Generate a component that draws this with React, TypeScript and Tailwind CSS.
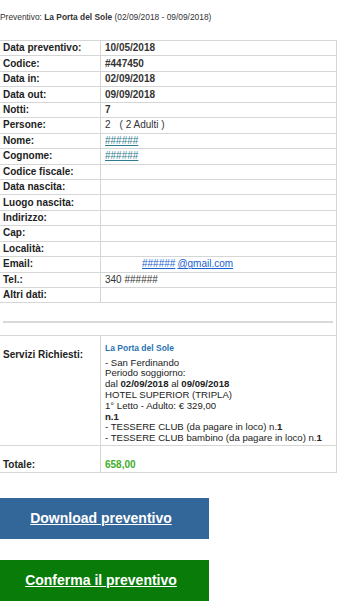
const rows: { label: string; value?: React.ReactNode }[] = [
  { label: 'Data preventivo:', value: <span className="font-bold">10/05/2018</span> },
  { label: 'Codice:', value: <span className="font-bold">#447450</span> },
  { label: 'Data in:', value: <span className="font-bold">02/09/2018</span> },
  { label: 'Data out:', value: <span className="font-bold">09/09/2018</span> },
  { label: 'Notti:', value: <span className="font-bold">7</span> },
  {
    label: 'Persone:',
    value: (
      <span>
        2<span className="ml-[9px]">( 2 Adulti )</span>
      </span>
    ),
  },
  { label: 'Nome:', value: <span className="text-[#2d7b8f] underline">######</span> },
  { label: 'Cognome:', value: <span className="text-[#2d7b8f] underline">######</span> },
  { label: 'Codice fiscale:' },
  { label: 'Data nascita:' },
  { label: 'Luogo nascita:' },
  { label: 'Indirizzo:' },
  { label: 'Cap:' },
  { label: 'Località:' },
  {
    label: 'Email:',
    value: (
      <span className="ml-[37px] text-[#1a5fd0] underline">
        ######<span className="ml-[2px]">@gmail.com</span>
      </span>
    ),
  },
  { label: 'Tel.:', value: <span>340 ######</span> },
  { label: 'Altri dati:' },
];

export default function App() {
  return (
    <div className="min-h-[616px] bg-white text-[#222] font-['Liberation_Sans',Arial,sans-serif]">
      <p className="pt-[12px] text-[8.4px] leading-[10px] text-[#333]">
        Preventivo: <span className="font-bold">La Porta del Sole</span> (02/09/2018 - 09/09/2018)
      </p>

      <div className="mt-[18px] w-[337px] border-r border-b border-[#d6d6d6] text-[10px] leading-[12px]">
        {rows.map((r) => (
          <div key={r.label} className="flex h-[15.45px] border-t border-[#d6d6d6]">
            <div className="flex w-[101px] items-center border-r border-[#d6d6d6] pl-[3px] font-bold">
              {r.label}
            </div>
            <div className="flex flex-1 items-center pl-[4px] text-[#333]">{r.value}</div>
          </div>
        ))}

        <div className="flex h-[32.3px] border-t border-[#d6d6d6] px-[3px] pt-[18px]">
          <div className="h-[2px] w-full bg-[#d9d9d9]" />
        </div>

        <div className="flex h-[110.7px] border-t border-[#d6d6d6]">
          <div className="w-[101px] border-r border-[#d6d6d6] pl-[3px] pt-[13px] font-bold">
            Servizi Richiesti:
          </div>
          <div className="flex-1 pl-[4px] pt-[7px] text-[9.6px] leading-[10.8px] text-[#222]">
            <div className="mb-[4px] text-[8.5px] font-bold text-[#2a74b5]">La Porta del Sole</div>
            <div>- San Ferdinando</div>
            <div>Periodo soggiorno:</div>
            <div>
              dal <span className="font-bold">02/09/2018</span> al <span className="font-bold">09/09/2018</span>
            </div>
            <div>HOTEL SUPERIOR (TRIPLA)</div>
            <div>1° Letto - Adulto: € 329,00</div>
            <div className="font-bold">n.1</div>
            <div>
              - TESSERE CLUB (da pagare in loco) n.<span className="font-bold">1</span>
            </div>
            <div>
              - TESSERE CLUB bambino (da pagare in loco) n.<span className="font-bold">1</span>
            </div>
          </div>
        </div>

        <div className="flex h-[26.6px] border-t border-[#d6d6d6]">
          <div className="w-[101px] border-r border-[#d6d6d6] pl-[3px] pt-[13px] font-bold">Totale:</div>
          <div className="flex-1 pl-[4px] pt-[13px] font-bold text-[#3fae2a]">658,00</div>
        </div>
      </div>

      <div className="mt-[24.5px] flex flex-col gap-[20.3px]">
        <a
          href="#"
          className="flex h-[41.7px] w-[209px] items-center justify-center bg-[#336699] pr-[7px] text-[14px] font-bold text-white underline"
        >
          Download preventivo
        </a>
        <a
          href="#"
          className="flex h-[41.7px] w-[209px] items-center justify-center bg-[#087b08] pr-[7px] text-[14px] font-bold text-white underline"
        >
          Conferma il preventivo
        </a>
      </div>
    </div>
  );
}
